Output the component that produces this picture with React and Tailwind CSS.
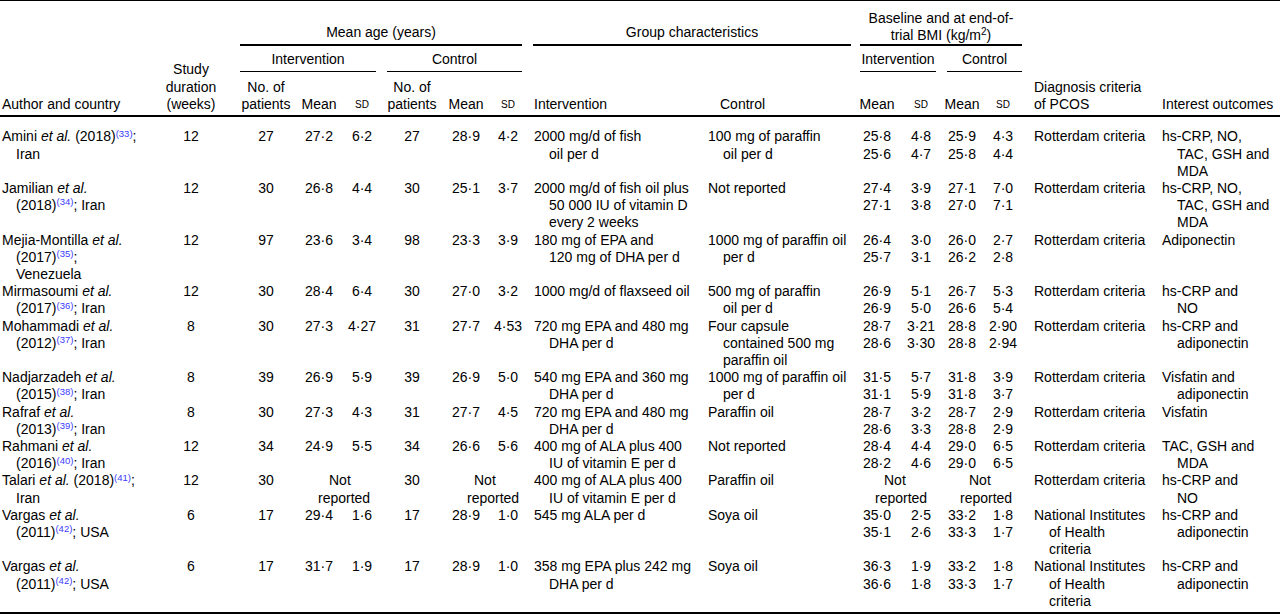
import React from 'react'

const COLS = 'grid grid-cols-[160px_62px_70px_54px_32px_68px_40px_44px_170px_155px_44px_44px_38px_44px_130px_125px]'

const Ref = ({ n }) => <sup className="text-[9.5px] text-[#3b3bff]">({n})</sup>
const Sd = () => <span className="text-[10px]">SD</span>

// one cell = a list of lines, continuation lines get a hanging indent
function Lines({ lines, first, rest }) {
  return (
    <div>
      {lines.map((l, i) => (
        <div key={i} className={`whitespace-nowrap ${i === 0 ? first : rest}`}>{l}</div>
      ))}
    </div>
  )
}

function Num({ lines }) {
  return (
    <div className="text-center">
      {lines.map((l, i) => <div key={i} className="whitespace-nowrap">{l}</div>)}
    </div>
  )
}

function NotReported({ a, b }) {
  return (
    <div className="col-span-2">
      <div className={`whitespace-nowrap ${a}`}>Not</div>
      <div className={`whitespace-nowrap ${b}`}>reported</div>
    </div>
  )
}

const rotterdam = ['Rotterdam criteria']
const nih = ['National Institutes', 'of Health', 'criteria']

const rows = [
  {
    author: [<>Amini <i>et al.</i> (2018)<Ref n="33" />;</>, 'Iran'],
    dur: '12', age: ['27', '27·2', '6·2', '27', '28·9', '4·2'],
    int: ['2000 mg/d of fish', 'oil per d'], ctrl: ['100 mg of paraffin', 'oil per d'],
    bmi: [['25·8', '25·6'], ['4·8', '4·7'], ['25·9', '25·8'], ['4·3', '4·4']],
    diag: rotterdam, out: ['hs-CRP, NO,', 'TAC, GSH and', 'MDA'],
  },
  {
    author: [<>Jamilian <i>et al.</i></>, <>(2018)<Ref n="34" />; Iran</>],
    dur: '12', age: ['30', '26·8', '4·4', '30', '25·1', '3·7'],
    int: ['2000 mg/d of fish oil plus', '50 000 IU of vitamin D', 'every 2 weeks'], ctrl: ['Not reported'],
    bmi: [['27·4', '27·1'], ['3·9', '3·8'], ['27·1', '27·0'], ['7·0', '7·1']],
    diag: rotterdam, out: ['hs-CRP, NO,', 'TAC, GSH and', 'MDA'],
  },
  {
    author: [<>Mejia-Montilla <i>et al.</i></>, <>(2017)<Ref n="35" />;</>, 'Venezuela'],
    dur: '12', age: ['97', '23·6', '3·4', '98', '23·3', '3·9'],
    int: ['180 mg of EPA and', '120 mg of DHA per d'], ctrl: ['1000 mg of paraffin oil', 'per d'],
    bmi: [['26·4', '25·7'], ['3·0', '3·1'], ['26·0', '26·2'], ['2·7', '2·8']],
    diag: rotterdam, out: ['Adiponectin'],
  },
  {
    author: [<>Mirmasoumi <i>et al.</i></>, <>(2017)<Ref n="36" />; Iran</>],
    dur: '12', age: ['30', '28·4', '6·4', '30', '27·0', '3·2'],
    int: ['1000 mg/d of flaxseed oil'], ctrl: ['500 mg of paraffin', 'oil per d'],
    bmi: [['26·9', '26·9'], ['5·1', '5·0'], ['26·7', '26·6'], ['5·3', '5·4']],
    diag: rotterdam, out: ['hs-CRP and', 'NO'],
  },
  {
    author: [<>Mohammadi <i>et al.</i></>, <>(2012)<Ref n="37" />; Iran</>],
    dur: '8', age: ['30', '27·3', '4·27', '31', '27·7', '4·53'],
    int: ['720 mg EPA and 480 mg', 'DHA per d'], ctrl: ['Four capsule', 'contained 500 mg', 'paraffin oil'],
    bmi: [['28·7', '28·6'], ['3·21', '3·30'], ['28·8', '28·8'], ['2·90', '2·94']],
    diag: rotterdam, out: ['hs-CRP and', 'adiponectin'],
  },
  {
    author: [<>Nadjarzadeh <i>et al.</i></>, <>(2015)<Ref n="38" />; Iran</>],
    dur: '8', age: ['39', '26·9', '5·9', '39', '26·9', '5·0'],
    int: ['540 mg EPA and 360 mg', 'DHA per d'], ctrl: ['1000 mg of paraffin oil', 'per d'],
    bmi: [['31·5', '31·1'], ['5·7', '5·9'], ['31·8', '31·8'], ['3·9', '3·7']],
    diag: rotterdam, out: ['Visfatin and', 'adiponectin'],
  },
  {
    author: [<>Rafraf <i>et al.</i></>, <>(2013)<Ref n="39" />; Iran</>],
    dur: '8', age: ['30', '27·3', '4·3', '31', '27·7', '4·5'],
    int: ['720 mg EPA and 480 mg', 'DHA per d'], ctrl: ['Paraffin oil'],
    bmi: [['28·7', '28·6'], ['3·2', '3·3'], ['28·7', '28·8'], ['2·9', '2·9']],
    diag: rotterdam, out: ['Visfatin'],
  },
  {
    author: [<>Rahmani <i>et al.</i></>, <>(2016)<Ref n="40" />; Iran</>],
    dur: '12', age: ['34', '24·9', '5·5', '34', '26·6', '5·6'],
    int: ['400 mg of ALA plus 400', 'IU of vitamin E per d'], ctrl: ['Not reported'],
    bmi: [['28·4', '28·2'], ['4·4', '4·6'], ['29·0', '29·0'], ['6·5', '6·5']],
    diag: rotterdam, out: ['TAC, GSH and', 'MDA'],
  },
  {
    author: [<>Talari <i>et al.</i> (2018)<Ref n="41" />;</>, 'Iran'],
    dur: '12', age: ['30', null, null, '30', null, null],
    int: ['400 mg of ALA plus 400', 'IU of vitamin E per d'], ctrl: ['Paraffin oil'],
    bmi: null,
    diag: rotterdam, out: ['hs-CRP and', 'NO'],
  },
  {
    author: [<>Vargas <i>et al.</i></>, <>(2011)<Ref n="42" />; USA</>],
    dur: '6', age: ['17', '29·4', '1·6', '17', '28·9', '1·0'],
    int: ['545 mg ALA per d'], ctrl: ['Soya oil'],
    bmi: [['35·0', '35·1'], ['2·5', '2·6'], ['33·2', '33·3'], ['1·8', '1·7']],
    diag: nih, out: ['hs-CRP and', 'adiponectin'],
  },
  {
    author: [<>Vargas <i>et al.</i></>, <>(2011)<Ref n="42" />; USA</>],
    dur: '6', age: ['17', '31·7', '1·9', '17', '28·9', '1·0'],
    int: ['358 mg EPA plus 242 mg', 'DHA per d'], ctrl: ['Soya oil'],
    bmi: [['36·3', '36·6'], ['1·9', '1·8'], ['33·2', '33·3'], ['1·8', '1·7']],
    diag: nih, out: ['hs-CRP and', 'adiponectin'],
  },
]

function Header() {
  return (
    <div className={`${COLS} grid-rows-[45px_26px_43px] border-t border-b-2 border-black`}>
      <div className="col-start-1 row-start-1 row-span-3 flex items-end pl-[2px] pb-[2px]">Author and country</div>
      <div className="col-start-2 row-start-1 row-span-3 flex flex-col justify-end items-center pb-[2px]">
        <div>Study</div>
        <div>duration</div>
        <div>(weeks)</div>
      </div>

      <div className="col-start-3 col-span-6 row-start-1 ml-[18px] mr-[8px] border-b-2 border-black flex items-end justify-center pb-[3px]">
        Mean age (years)
      </div>
      <div className="col-start-9 col-span-2 row-start-1 ml-[3px] mr-[4px] border-b-2 border-black flex items-end justify-center pb-[3px]">
        Group characteristics
      </div>
      <div className="col-start-11 col-span-4 row-start-1 ml-[5px] mr-[3px] border-b-2 border-black flex flex-col items-center justify-end">
        <div>Baseline and at end-of-</div>
        <div>trial BMI (kg/m<sup className="text-[10px]">2</sup>)</div>
      </div>

      <div className="col-start-15 row-start-1 row-span-3 flex flex-col justify-end pl-[9px] pb-[2px]">
        <div>Diagnosis criteria</div>
        <div>of PCOS</div>
      </div>
      <div className="col-start-16 row-start-1 row-span-3 flex items-end pl-[7px] pb-[2px]">Interest outcomes</div>

      <div className="col-start-3 col-span-3 row-start-2 ml-[18px] mr-[2px] border-b border-black flex items-end justify-center pb-[3px]">Intervention</div>
      <div className="col-start-6 col-span-3 row-start-2 ml-[9px] mr-[8px] border-b border-black flex items-end justify-center pb-[3px]">Control</div>
      <div className="col-start-11 col-span-2 row-start-2 ml-[5px] mr-[7px] border-b border-black flex items-end justify-center pb-[3px]">Intervention</div>
      <div className="col-start-13 col-span-2 row-start-2 ml-[4px] mr-[3px] border-b border-black flex items-end justify-center pb-[3px]">Control</div>

      <div className="col-start-3 row-start-3 flex flex-col justify-end items-center pl-[18px] pb-[2px]">
        <div>No. of</div>
        <div>patients</div>
      </div>
      <div className="col-start-4 row-start-3 flex items-end justify-center pb-[2px]">Mean</div>
      <div className="col-start-5 row-start-3 flex items-end justify-center pb-[2px]"><Sd /></div>
      <div className="col-start-6 row-start-3 flex flex-col justify-end items-center pb-[2px]">
        <div>No. of</div>
        <div>patients</div>
      </div>
      <div className="col-start-7 row-start-3 flex items-end justify-center pb-[2px]">Mean</div>
      <div className="col-start-8 row-start-3 flex items-end justify-center pb-[2px]"><Sd /></div>
      <div className="col-start-9 row-start-3 flex items-end pl-[4px] pb-[2px]">Intervention</div>
      <div className="col-start-10 row-start-3 flex items-end pl-[20px] pb-[2px]">Control</div>
      <div className="col-start-11 row-start-3 flex items-end justify-center pb-[2px]">Mean</div>
      <div className="col-start-12 row-start-3 flex items-end justify-center pb-[2px]"><Sd /></div>
      <div className="col-start-13 row-start-3 flex items-end justify-center pb-[2px]">Mean</div>
      <div className="col-start-14 row-start-3 flex items-end justify-center pb-[2px]"><Sd /></div>
    </div>
  )
}

function Row({ r }) {
  const [n1, m1, s1, n2, m2, s2] = r.age
  return (
    <div className={COLS}>
      <Lines lines={r.author} first="pl-[2px]" rest="pl-[16px]" />
      <Num lines={[r.dur]} />
      <div className="pl-[18px] text-center">{n1}</div>
      {m1 ? (
        <>
          <Num lines={[m1]} />
          <Num lines={[s1]} />
        </>
      ) : (
        <NotReported a="pl-[37px]" b="pl-[26px]" />
      )}
      <Num lines={[n2]} />
      {m2 ? (
        <>
          <Num lines={[m2]} />
          <Num lines={[s2]} />
        </>
      ) : (
        <NotReported a="pl-[28px]" b="pl-[21px]" />
      )}
      <Lines lines={r.int} first="pl-[4px]" rest="pl-[19px]" />
      <Lines lines={r.ctrl} first="pl-[8px]" rest="pl-[23px]" />
      {r.bmi ? (
        r.bmi.map((c, i) => <Num key={i} lines={c} />)
      ) : (
        <>
          <NotReported a="pl-[29px]" b="pl-[20px]" />
          <NotReported a="pl-[26px]" b="pl-[17px]" />
        </>
      )}
      <Lines lines={r.diag} first="pl-[9px]" rest="pl-[24px]" />
      <Lines lines={r.out} first="pl-[7px]" rest="pl-[22px]" />
    </div>
  )
}

export default function App() {
  return (
    <div className="w-[1280px] h-[615px] bg-white text-black text-[14px] leading-[17.2px] font-['Liberation_Sans',Arial,sans-serif] overflow-hidden">
      <Header />
      <div className="pt-[11.4px] pb-[2px] border-b-2 border-black">
        {rows.map((r, i) => <Row key={i} r={r} />)}
      </div>
    </div>
  )
}
